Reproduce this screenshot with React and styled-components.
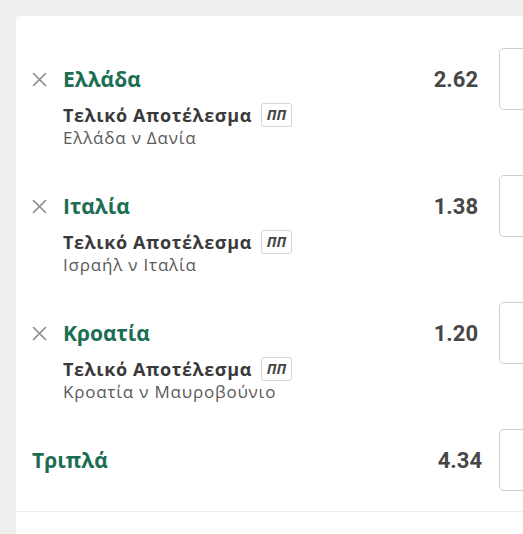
import React from 'react'
import styled, { createGlobalStyle } from 'styled-components'

const GlobalStyle = createGlobalStyle`
  html, body {
    margin: 0;
    padding: 0;
    background: #efefef;
    overflow: hidden;
    font-family: "Open Sans", "Noto Sans", sans-serif;
  }
`

const Page = styled.div`
  padding: 16px 0 0 16px;
  height: 534px;
  box-sizing: border-box;
`

const Card = styled.div`
  width: 559px;
  background: #fff;
  border-radius: 4px 0 0 0;
  padding-top: 32px;
  min-height: 520px;
`

const Row = styled.div`
  display: flex;
  align-items: flex-start;
  height: 127px;
  padding: 0 16px;
`

const Remove = styled.button`
  width: 31px;
  height: 24px;
  margin-top: 19px;
  padding: 0;
  border: none;
  background: none;
  display: flex;
  align-items: center;
  color: #8a8a8a;
`

const Info = styled.div`
  flex: 1;
  min-width: 0;
`

const Title = styled.div`
  margin-top: 19px;
  font-size: 21px;
  line-height: 24px;
  font-weight: 700;
  color: #1b6e52;
`

const Market = styled.div`
  display: flex;
  align-items: center;
  gap: 9px;
  margin-top: 12px;
  font-size: 18px;
  line-height: 24px;
  letter-spacing: 0.6px;
  font-weight: 700;
  color: #3a3a3a;
`

const Badge = styled.span`
  display: inline-flex;
  align-items: center;
  justify-content: center;
  width: 31px;
  height: 24px;
  box-sizing: border-box;
  border: 1px solid #d6d6d6;
  border-radius: 3px;
  font-size: 14px;
  font-style: italic;
  font-weight: 700;
  letter-spacing: 0;
  color: #444;
`

const Match = styled.div`
  font-size: 17px;
  line-height: 22px;
  letter-spacing: 0.8px;
  color: #5a5a5a;
`

const Odds = styled.div`
  height: 62px;
  display: flex;
  align-items: center;
  margin-right: ${p => (p.$total ? 17 : 21)}px;
  font-family: Roboto, sans-serif;
  font-size: 22px;
  font-weight: 700;
  color: #474747;
`

const Stake = styled.div`
  width: 60px;
  height: 62px;
  box-sizing: border-box;
  border: 1px solid #cfcfcf;
  border-radius: 5px;
`

const Divider = styled.div`
  height: 1px;
  background: #ededed;
  margin-top: -45px;
`

const CloseIcon = () => (
  <svg width="15" height="15" viewBox="0 0 15 15" fill="none" stroke="currentColor" strokeWidth="1.6" strokeLinecap="round">
    <path d="M1.5 1.5 L13.5 13.5 M13.5 1.5 L1.5 13.5" />
  </svg>
)

const selections = [
  { pick: 'Ελλάδα', odds: '2.62', match: 'Ελλάδα ν Δανία' },
  { pick: 'Ιταλία', odds: '1.38', match: 'Ισραήλ ν Ιταλία' },
  { pick: 'Κροατία', odds: '1.20', match: 'Κροατία ν Μαυροβούνιο' },
]

const App = () => {
  return (
    <Page>
      <GlobalStyle />
      <Card>
        {selections.map(s => (
          <Row key={s.pick}>
            <Remove aria-label="remove"><CloseIcon /></Remove>
            <Info>
              <Title>{s.pick}</Title>
              <Market>
                Τελικό Αποτέλεσμα
                <Badge>ΠΠ</Badge>
              </Market>
              <Match>{s.match}</Match>
            </Info>
            <Odds>{s.odds}</Odds>
            <Stake />
          </Row>
        ))}
        <Row>
          <Info>
            <Title>Τριπλά</Title>
          </Info>
          <Odds $total>4.34</Odds>
          <Stake />
        </Row>
        <Divider />
      </Card>
    </Page>
  )
}

export default App
